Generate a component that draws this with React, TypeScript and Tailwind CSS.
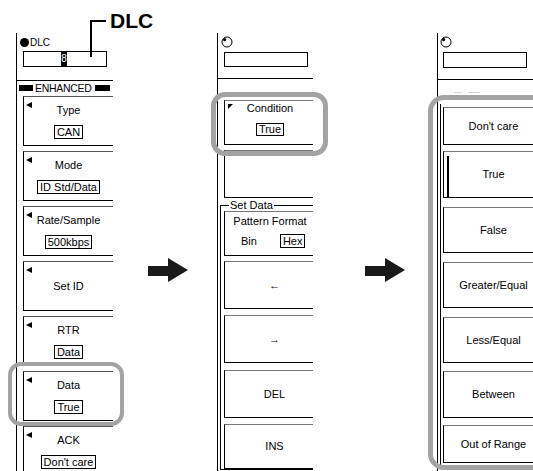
import React from "react";

const Tri = () => (
  <span className="absolute left-[2px] top-[5px] w-0 h-0 border-y-[3px] border-y-transparent border-r-[6px] border-r-black" />
);

const Knob = () => (
  <svg width="12" height="12" viewBox="0 0 12 12" className="block">
    <circle cx="6" cy="6" r="5" fill="none" stroke="#000" strokeWidth="1" />
    <circle cx="3.6" cy="3.6" r="1.6" fill="#000" />
  </svg>
);

function Btn1({ title, value }: { title: string; value?: string }) {
  return (
    <div className="relative w-[90px] h-[50px] mb-[5px] border-l border-t border-b border-black border-t-[#555] shrink-0">
      <Tri />
      {value ? (
        <div className="flex flex-col items-center pt-[6px]">
          <div className="leading-[14px]">{title}</div>
          <div className="mt-[8px] border border-black px-[2px] leading-[12px]">{value}</div>
        </div>
      ) : (
        <div className="h-full flex items-center justify-center">{title}</div>
      )}
    </div>
  );
}

function Btn({ h, mt, children, cls }: { h: string; mt: string; children?: React.ReactNode; cls?: string }) {
  return (
    <div className={`relative w-[100px] ${h} ${mt} border-l border-t border-b border-black border-t-[#777] shrink-0 flex items-center justify-center ${cls ?? ""}`}>
      {children}
    </div>
  );
}

const Arrow = () => (
  <svg width="40" height="24" viewBox="0 0 40 24" className="block">
    <polygon points="0,8 20,8 20,0 40,12 20,24 20,18 0,18" fill="#1a1a1a" />
  </svg>
);

export default function App() {
  return (
    <div className="relative w-[533px] h-[471px] bg-white overflow-hidden flex items-start font-['Liberation_Sans',Arial,sans-serif] text-[11px] text-black">
      {/* Panel 1 */}
      <div className="ml-[16px] mt-[33px] w-[97px] h-[438px] border-l border-black overflow-hidden shrink-0">
        <div className="h-[48px] border-b border-black">
          <div className="ml-[3px] pt-[5px] flex items-center h-[14px]">
            <span className="w-[9px] h-[9px] rounded-full bg-black inline-block" />
            <span className="ml-[1px] text-[10px] leading-[10px]">DLC</span>
          </div>
          <div className="relative ml-[6px] mt-[4px] w-[84px] h-[16px] border border-black">
            <span className="absolute left-[37px] top-0 w-[6px] h-full bg-black text-white text-[10px] leading-[14px] flex justify-center">8</span>
          </div>
        </div>
        <div className="mt-[2px] h-[10px] flex items-center">
          <span className="ml-[2px] w-[14px] h-[6px] bg-black" />
          <span className="ml-[2px] text-[10.5px] leading-[10px] tracking-[-0.3px]">ENHANCED</span>
          <span className="ml-[3px] w-[15px] h-[6px] bg-black" />
        </div>
        <div className="mt-[3px] ml-[6px] flex flex-col">
          <Btn1 title="Type" value="CAN" />
          <Btn1 title="Mode" value="ID Std/Data" />
          <Btn1 title="Rate/Sample" value="500kbps" />
          <Btn1 title="Set ID" />
          <Btn1 title="RTR" value="Data" />
          <Btn1 title="Data" value="True" />
          <Btn1 title="ACK" value="Don't care" />
        </div>
      </div>

      {/* Arrow 1 */}
      <div className="ml-[35px] mt-[258px] shrink-0">
        <Arrow />
      </div>

      {/* Panel 2 */}
      <div className="ml-[29px] mt-[33px] w-[96px] h-[438px] border-l border-black overflow-hidden shrink-0">
        <div className="h-[46px] border-b border-black">
          <div className="ml-[3px] pt-[3px]">
            <Knob />
          </div>
          <div className="ml-[6px] mt-[4px] w-[84px] h-[15px] border border-black" />
        </div>
        <div className="relative ml-[6px] mt-[21px] w-[100px] h-[45px] border-l border-t border-b border-black border-t-[#777]">
          <span className="absolute left-[3px] top-[3px] w-0 h-0 border-t-[5px] border-t-black border-r-[5px] border-r-transparent" />
          <div className="flex flex-col items-center pt-0 w-[90px]">
            <div className="leading-[14px]">Condition</div>
            <div className="mt-[8px] border border-black px-[2px] leading-[11px]">True</div>
          </div>
        </div>
        <div className="ml-[6px] mt-[5px] w-[100px] h-[48px] border-l border-t border-b border-black border-t-[#777]" />
        <div className="relative ml-[2px] mt-[7px] w-[120px] h-[265px] border-l border-t border-b border-black">
          <span className="absolute -top-[7px] left-[8px] bg-white px-[1px] leading-[12px]">Set Data</span>
          <div className="ml-[3px] flex flex-col">
            <div className="w-[100px] h-[45px] mt-[5px] border-l border-t border-b border-black border-t-[#777]">
              <div className="w-[90px] text-center pt-[2px] leading-[14px]">Pattern Format</div>
              <div className="flex items-center pl-[16px] mt-[6px] gap-[23px]">
                <span className="leading-[14px]">Bin</span>
                <span className="border border-black px-[2px] leading-[12px]">Hex</span>
              </div>
            </div>
            <Btn h="h-[48px]" mt="mt-[5px]">
              <span className="w-[90px] text-center">←</span>
            </Btn>
            <Btn h="h-[48px]" mt="mt-[6px]">
              <span className="w-[90px] text-center">→</span>
            </Btn>
            <Btn h="h-[48px]" mt="mt-[7px]">
              <span className="w-[90px] text-center">DEL</span>
            </Btn>
            <Btn h="h-[45px]" mt="mt-[6px]">
              <span className="w-[90px] text-center">INS</span>
            </Btn>
          </div>
        </div>
      </div>

      {/* Arrow 2 */}
      <div className="ml-[52px] mt-[258px] shrink-0">
        <Arrow />
      </div>

      {/* Panel 3 */}
      <div className="ml-[32px] mt-[33px] w-[96px] h-[438px] border-l border-black overflow-hidden shrink-0">
        <div className="h-[47px] border-b border-black">
          <div className="ml-[2px] pt-[3px]">
            <Knob />
          </div>
          <div className="ml-[5px] mt-[4px] w-[84px] h-[16px] border border-black" />
        </div>
        <div className="flex gap-[6px] ml-[16px] mt-[12px] h-[1px]">
          <span className="w-[8px] h-[1px] bg-[#d4d4d4]" />
          <span className="w-[12px] h-[1px] bg-[#d4d4d4]" />
        </div>
        <div className="ml-[2px] mt-[11px] border-l border-black pb-[3px] flex flex-col">
          <Btn h="h-[38px]" mt="mt-[3px] ml-[2px]">
            <span className="w-[90px] text-center">Don't care</span>
          </Btn>
          <Btn h="h-[47px]" mt="mt-[6px] ml-[2px]">
            <span className="absolute left-[3px] top-[4px] w-[2px] h-[42px] bg-black" />
            <span className="w-[90px] text-center">True</span>
          </Btn>
          <Btn h="h-[46px]" mt="mt-[9px] ml-[2px]">
            <span className="w-[90px] text-center">False</span>
          </Btn>
          <Btn h="h-[46px]" mt="mt-[9px] ml-[2px]">
            <span className="w-[90px] text-center">Greater/Equal</span>
          </Btn>
          <Btn h="h-[46px]" mt="mt-[9px] ml-[2px]">
            <span className="w-[90px] text-center">Less/Equal</span>
          </Btn>
          <Btn h="h-[47px]" mt="mt-[8px] ml-[2px]">
            <span className="w-[90px] text-center">Between</span>
          </Btn>
          <Btn h="h-[38px]" mt="mt-[7px] ml-[2px]">
            <span className="w-[90px] text-center">Out of Range</span>
          </Btn>
        </div>
      </div>

      {/* DLC callout */}
      <span className="absolute left-[110px] top-[10px] text-[21px] font-bold leading-[21px]">DLC</span>
      <span className="absolute left-[90px] top-[20px] w-[1.5px] h-[37px] bg-black" />
      <span className="absolute left-[90px] top-[20px] w-[16px] h-[1.5px] bg-black" />

      {/* Highlights */}
      <div className="absolute left-[8px] top-[362px] w-[116px] h-[64px] border-[4px] border-[#a3a3a3] rounded-[13px]" />
      <div className="absolute left-[211px] top-[92px] w-[117px] h-[64px] border-[5px] border-[#a3a3a3] rounded-[14px]" />
      <div className="absolute left-[428px] top-[95px] w-[120px] h-[375px] border-[5px] border-[#a3a3a3] rounded-[16px]" />
    </div>
  );
}
